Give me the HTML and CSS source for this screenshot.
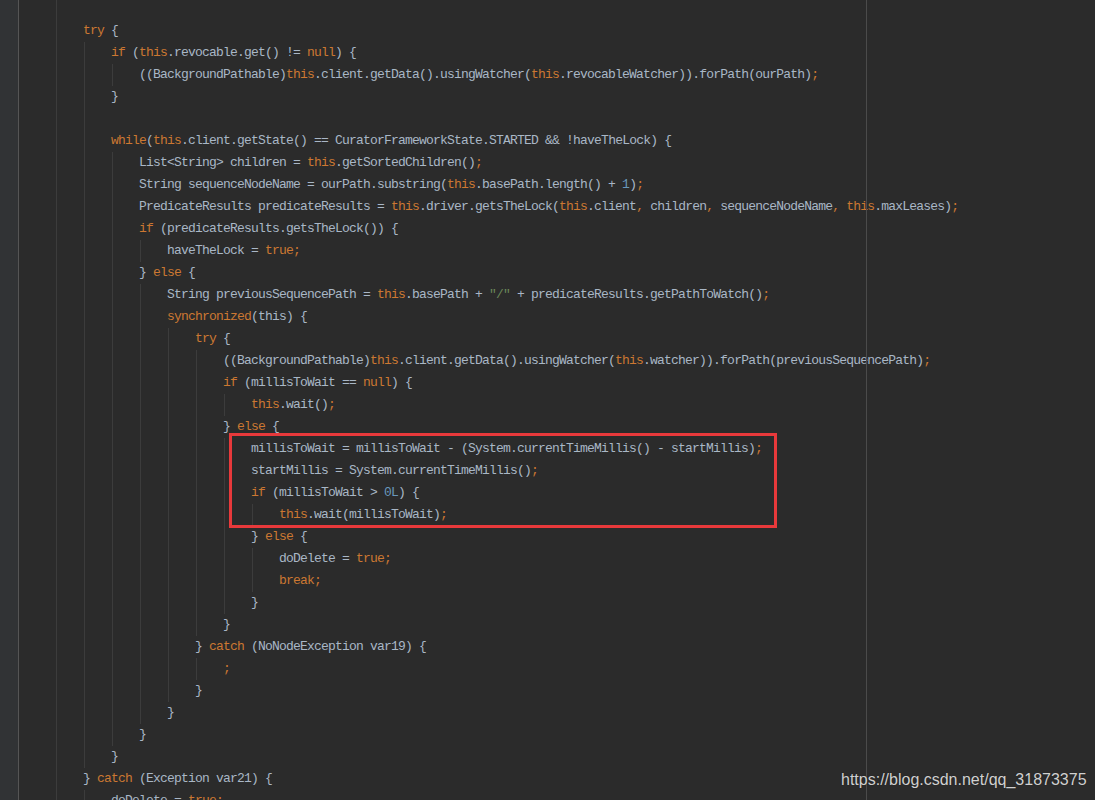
FILE: index.html
```html
<!DOCTYPE html>
<html lang="en">
<head>
  <meta charset="UTF-8">
  <title>InterProcessSemaphore - internalLock</title>
  <link rel="stylesheet" href="styles.css">
</head>
<body>
  <div class="editor">
    <div class="gutter"></div>

    <div class="code">
      <div class="ln l2"></div>
      <div class="ln l2"><b class="k">try</b> {</div>
      <div class="ln l3"><b class="k">if</b> (<b class="k">this</b>.revocable.get() != <b class="k">null</b>) {</div>
      <div class="ln l4">((BackgroundPathable)<b class="k">this</b>.client.getData().usingWatcher(<b class="k">this</b>.revocableWatcher)).forPath(ourPath)<b class="k">;</b></div>
      <div class="ln l3">}</div>
      <div class="ln l3"></div>
      <div class="ln l3"><b class="k">while</b>(<b class="k">this</b>.client.getState() == CuratorFrameworkState.STARTED &amp;&amp; !haveTheLock) {</div>
      <div class="ln l4">List&lt;String&gt; children = <b class="k">this</b>.getSortedChildren()<b class="k">;</b></div>
      <div class="ln l4">String sequenceNodeName = ourPath.substring(<b class="k">this</b>.basePath.length() + <b class="n">1</b>)<b class="k">;</b></div>
      <div class="ln l4">PredicateResults predicateResults = <b class="k">this</b>.driver.getsTheLock(<b class="k">this</b>.client<b class="k">,</b> children<b class="k">,</b> sequenceNodeName<b class="k">,</b> <b class="k">this</b>.maxLeases)<b class="k">;</b></div>
      <div class="ln l4"><b class="k">if</b> (predicateResults.getsTheLock()) {</div>
      <div class="ln l5">haveTheLock = <b class="k">true;</b></div>
      <div class="ln l4">} <b class="k">else</b> {</div>
      <div class="ln l5">String previousSequencePath = <b class="k">this</b>.basePath + <b class="s">"/"</b> + predicateResults.getPathToWatch()<b class="k">;</b></div>
      <div class="ln l5"><b class="k">synchronized</b>(this) {</div>
      <div class="ln l6"><b class="k">try</b> {</div>
      <div class="ln l7">((BackgroundPathable)<b class="k">this</b>.client.getData().usingWatcher(<b class="k">this</b>.watcher)).forPath(previousSequencePath)<b class="k">;</b></div>
      <div class="ln l7"><b class="k">if</b> (millisToWait == <b class="k">null</b>) {</div>
      <div class="ln l8"><b class="k">this</b>.wait()<b class="k">;</b></div>
      <div class="ln l7">} <b class="k">else</b> {</div>
      <div class="ln l8">millisToWait = millisToWait - (System.currentTimeMillis() - startMillis)<b class="k">;</b></div>
      <div class="ln l8">startMillis = System.currentTimeMillis()<b class="k">;</b></div>
      <div class="ln l8"><b class="k">if</b> (millisToWait &gt; <b class="n">0L</b>) {</div>
      <div class="ln l9"><b class="k">this</b>.wait(millisToWait)<b class="k">;</b></div>
      <div class="ln l8">} <b class="k">else</b> {</div>
      <div class="ln l9">doDelete = <b class="k">true;</b></div>
      <div class="ln l9"><b class="k">break;</b></div>
      <div class="ln l8">}</div>
      <div class="ln l7">}</div>
      <div class="ln l6">} <b class="k">catch</b> (NoNodeException var19) {</div>
      <div class="ln l7"><b class="k">;</b></div>
      <div class="ln l6">}</div>
      <div class="ln l5">}</div>
      <div class="ln l4">}</div>
      <div class="ln l3">}</div>
      <div class="ln l2">} <b class="k">catch</b> (Exception var21) {</div>
      <div class="ln l3">doDelete = <b class="k">true;</b></div>
    </div>

    <!-- right margin guide, highlight box and blog watermark sit over the code -->
    <div class="margin-line"></div>
    <div class="highlight"></div>
    <div class="watermark">https://blog.csdn.net/qq_31873375</div>
  </div>
</body>
</html>
```

FILE: styles.css
```css
body {
  margin: 0;
  background-color: #2b2b2b;
  overflow: hidden;
}

.editor {
  position: relative;
  display: flex;
  height: 800px;
  overflow: hidden;
}

.gutter {
  width: 18px;
  flex-shrink: 0;
  background-color: #313335;
  border-right: 1px solid #555555;
}

.code {
  flex: 1;
  margin-top: -2px;
  padding-left: 8px;
  font-family: "Liberation Mono", monospace;
  font-size: 13px;
  letter-spacing: -0.8px;
  color: #a9b7c6;
}

.ln {
  height: 22px;
  line-height: 22px;
  white-space: pre;
}

/* indentation, with a guide line at every level but the first */
.ln::before {
  content: "";
  display: inline-block;
  vertical-align: top;
  height: 22px;
  width: calc((var(--n) - 1) * 28px);
  padding-left: 28px;
  background: repeating-linear-gradient(to right, transparent 0 1px, #3c3c3c 1px 2px, transparent 2px 28px);
  background-origin: content-box;
  background-clip: content-box;
}

.l2 { --n: 2; }
.l3 { --n: 3; }
.l4 { --n: 4; }
.l5 { --n: 5; }
.l6 { --n: 6; }
.l7 { --n: 7; }
.l8 { --n: 8; }
.l9 { --n: 9; }

.ln b {
  font-weight: normal;
}

.k {
  color: #cc7832;
}

.n {
  color: #6897bb;
}

.s {
  color: #6a8759;
}

.margin-line {
  position: absolute;
  left: 866px;
  top: 0;
  bottom: 0;
  width: 1px;
  background-color: #4b4b4b;
}

.highlight {
  position: absolute;
  left: 229px;
  top: 433px;
  width: 548px;
  height: 95px;
  box-sizing: border-box;
  border: 3px solid #e8393b;
}

.watermark {
  position: absolute;
  left: 841px;
  top: 771px;
  font-family: "Liberation Sans", Arial, sans-serif;
  font-size: 16px;
  color: #d0d0d0;
  text-shadow: 0 0 1px #1e1e1e;
}
```
